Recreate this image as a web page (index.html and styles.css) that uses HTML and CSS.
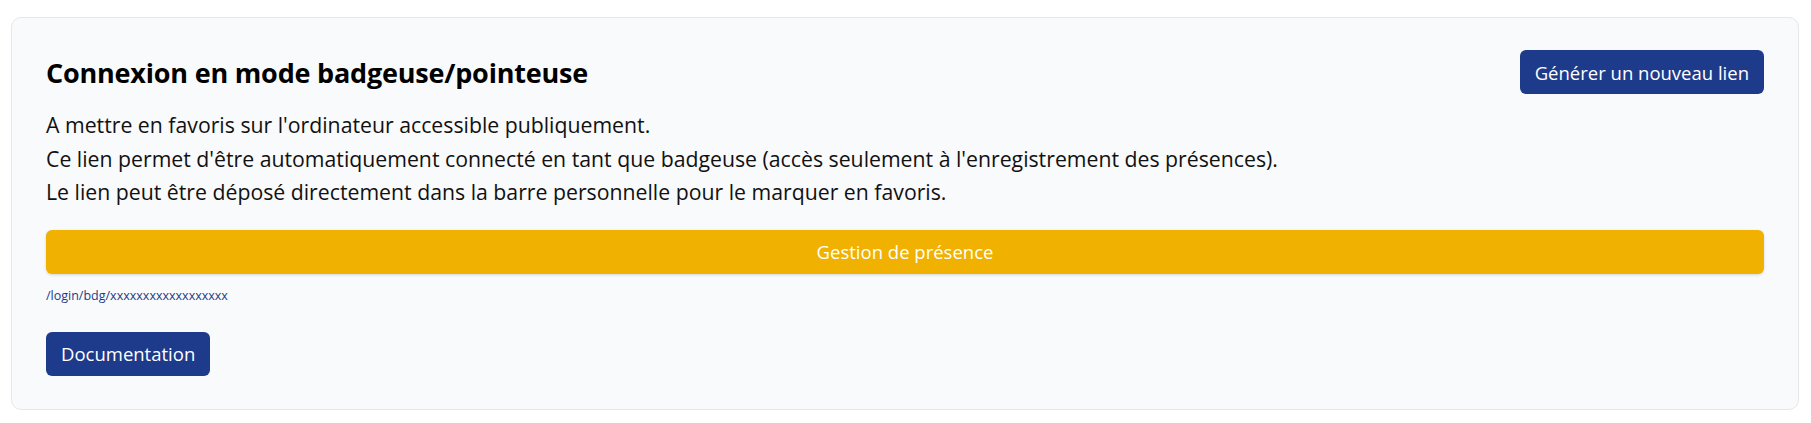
FILE: index.html
```html
<!DOCTYPE html>
<html lang="fr">
<head>
    <meta charset="UTF-8">
    <meta name="viewport" content="width=device-width, initial-scale=1.0">
    <title>Connexion badgeuse</title>
    <link rel="stylesheet" href="styles.css">
</head>
<body>

    <div class="card">
        <!-- En-tete -->
        <div class="card-header">
            <h2>Connexion en mode badgeuse/pointeuse</h2>
            <button type="button" class="btn btn-blue">Générer un nouveau lien</button>
        </div>

        <div class="card-text">
            <p>A mettre en favoris sur l'ordinateur accessible publiquement.</p>
            <p>Ce lien permet d'être automatiquement connecté en tant que badgeuse (accès seulement à l'enregistrement des présences).</p>
            <p>Le lien peut être déposé directement dans la barre personnelle pour le marquer en favoris.</p>
        </div>

        <a href="#" class="bookmark">Gestion de présence</a>
        <div class="link-path">/login/bdg/xxxxxxxxxxxxxxxxxx</div>

        <button type="button" class="btn btn-blue">Documentation</button>
    </div>

</body>
</html>
```

FILE: styles.css
```css
/* Basic reset */
* {
    margin: 0;
    padding: 0;
    box-sizing: border-box;
}

body {
    font-family: "Open Sans", "Noto Sans", Arial, sans-serif;
    background-color: #ffffff;
    color: #111;
    padding: 17px 12px 0 11px;
}

/* Carte */
.card {
    background-color: #f9fafb;
    border: 1px solid #e5e7eb;
    border-radius: 10px;
    padding: 32px 34px 33px 34px;
}

.card-header {
    display: flex;
    justify-content: space-between;
    align-items: center;
}

.card-header h2 {
    font-size: 27px;
    font-weight: 700;
    color: #000;
    letter-spacing: -0.2px;
}

.card-text {
    margin-top: 14px;
    font-size: 21.25px;
    line-height: 33.6px;
    color: #111;
}

/* Boutons */
.btn {
    font-family: inherit;
    font-size: 18.5px;
    border: none;
    border-radius: 6px;
    height: 44px;
    padding: 0 15px;
    cursor: pointer;
}

.btn-blue {
    background-color: #1e3a8a;
    color: #fff;
}

.btn-blue:hover {
    background-color: #1e40af;
}

.bookmark {
    display: flex;
    align-items: center;
    justify-content: center;
    margin-top: 21px;
    height: 44px;
    background-color: #f0b100;
    color: #fff;
    font-size: 18.5px;
    text-decoration: none;
    border-radius: 6px;
    box-shadow: 0 1px 3px rgba(0, 0, 0, 0.15);
}

.link-path {
    margin-top: 13px;
    font-size: 12.5px;
    line-height: 17px;
    color: #1e3a8a;
}

.card > .btn {
    margin-top: 28px;
}
```
